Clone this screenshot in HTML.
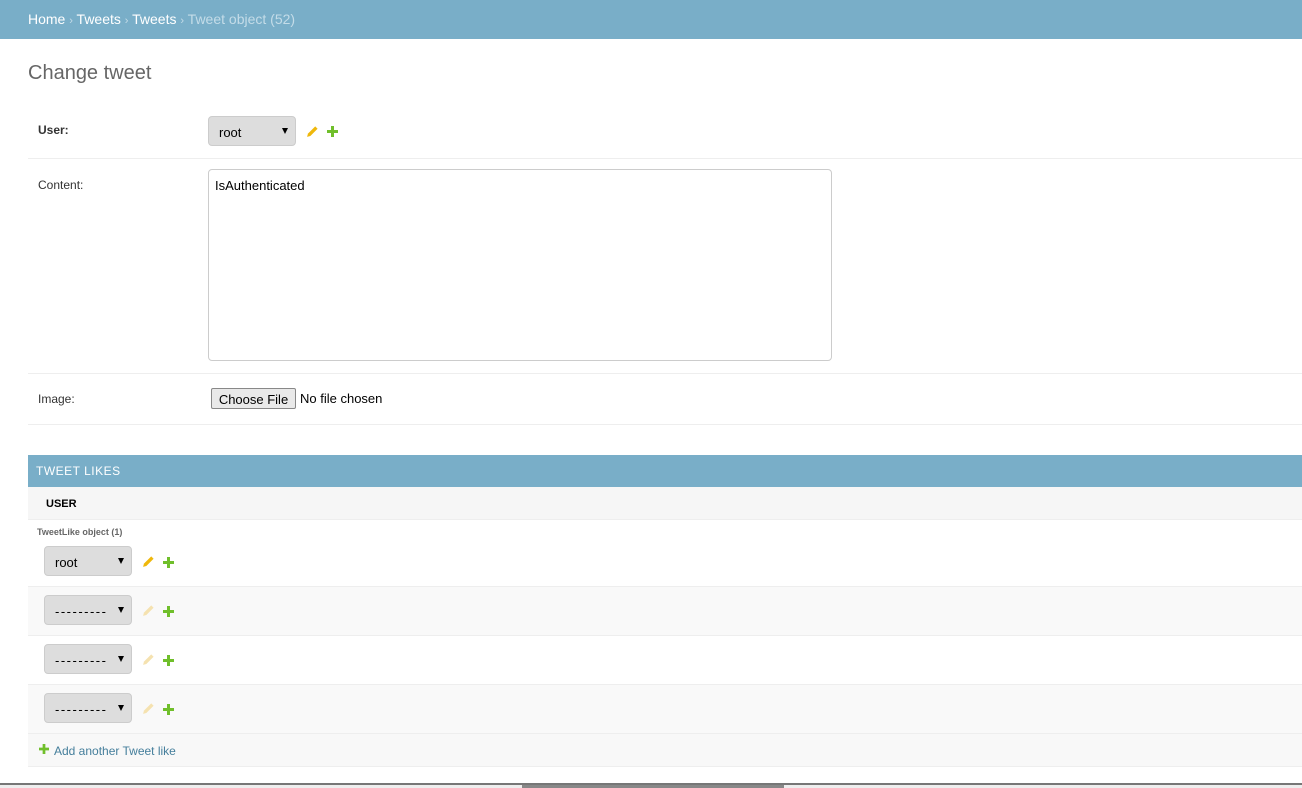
<!DOCTYPE html>
<html><head><style>
*{box-sizing:border-box;margin:0;padding:0}
body{width:1302px;height:788px;overflow:hidden;background:#fff;font-family:"Liberation Sans",sans-serif;font-size:13px;color:#333;position:relative}
.hdr{position:absolute;left:0;top:0;width:1302px;height:39px;background:#79aec8;color:#fff;font-size:14px;padding:11px 28px;white-space:nowrap}
.hdr .c{color:#c4dce8}
.hdr .s{font-size:11px;color:#c4dce8}
h1{position:absolute;left:28px;top:62px;font-size:20px;font-weight:normal;color:#666}
.row{position:absolute;left:28px;width:1274px;border-bottom:1px solid #eee}
.lab{position:absolute;left:10px;font-size:12px;color:#333}
.sel{position:absolute;background:#ddd;border:1px solid #ccc;border-radius:4px;height:30px;width:88px;font-size:13px;color:#000;padding:8px 10px;white-space:nowrap}
.sel.d{letter-spacing:1.5px}
.sel:after{content:"";position:absolute;right:7px;top:11px;border-left:3.5px solid transparent;border-right:3.5px solid transparent;border-top:6px solid #000}
.ic{position:absolute}
</style></head><body>
<div class="hdr">Home <span class="s">›</span> Tweets <span class="s">›</span> Tweets <span class="s">›</span> <span class="c">Tweet object (52)</span></div>
<h1>Change tweet</h1>

<div class="row" style="top:106px;height:53px">
<div class="lab" style="top:17px;font-weight:bold">User:</div>
<div class="sel" style="left:180px;top:10px">root</div>
<svg class="ic" style="left:278px;top:19px" width="13" height="13" viewBox="0 0 12 12"><path d="M1 11 L1.8 8 L8.5 1.3 L10.7 3.5 L4 10.2 Z" fill="#efb80b"/></svg>
<svg class="ic" style="left:299px;top:20px" width="11" height="11" viewBox="0 0 11 11"><path d="M4 0h3v4h4v3H7v4H4V7H0V4h4z" fill="#70bf2b"/></svg>
</div>

<div class="row" style="top:159px;height:215px">
<div class="lab" style="top:19px">Content:</div>
<div style="position:absolute;left:180px;top:10px;width:624px;height:192px;border:1px solid #ccc;border-radius:4px;padding:8px 6px;color:#000;font-size:13px">IsAuthenticated</div>
</div>

<div class="row" style="top:374px;height:51px">
<div class="lab" style="top:18px">Image:</div>
<div style="position:absolute;left:183px;top:14px;width:85px;height:21px;border:1px solid #888;background:#e9e9e9;border-radius:2px;font-size:13px;color:#000;padding:3px 0;text-align:center;white-space:nowrap">Choose File</div>
<div style="position:absolute;left:272px;top:17px;font-size:13px;color:#000;white-space:nowrap">No file chosen</div>
</div>

<div style="position:absolute;left:28px;top:455px;width:1274px;height:32px;background:#79aec8;color:#fff;font-size:12px;padding:9px 8px;letter-spacing:.5px">TWEET LIKES</div>
<div class="row" style="top:487px;height:33px;background:#f6f6f6"><div style="position:absolute;left:18px;top:11px;font-size:11px;font-weight:bold;color:#000">USER</div></div>

<div class="row" style="top:520px;height:67px">
<div style="position:absolute;left:9px;top:7px;font-size:9px;font-weight:bold;color:#666">TweetLike object (1)</div>
<div class="sel" style="left:16px;top:26px">root</div>
<svg class="ic" style="left:114px;top:35px" width="13" height="13" viewBox="0 0 12 12"><path d="M1 11 L1.8 8 L8.5 1.3 L10.7 3.5 L4 10.2 Z" fill="#efb80b"/></svg>
<svg class="ic" style="left:135px;top:37px" width="11" height="11" viewBox="0 0 11 11"><path d="M4 0h3v4h4v3H7v4H4V7H0V4h4z" fill="#70bf2b"/></svg>
</div>

<div class="row" style="top:587px;height:49px;background:#f9f9f9">
<div class="sel d" style="left:16px;top:8px">---------</div>
<svg class="ic" style="left:114px;top:17px" width="13" height="13" viewBox="0 0 12 12"><path d="M1 11 L1.8 8 L8.5 1.3 L10.7 3.5 L4 10.2 Z" fill="#f5e2b0"/></svg>
<svg class="ic" style="left:135px;top:19px" width="11" height="11" viewBox="0 0 11 11"><path d="M4 0h3v4h4v3H7v4H4V7H0V4h4z" fill="#70bf2b"/></svg>
</div>
<div class="row" style="top:636px;height:49px">
<div class="sel d" style="left:16px;top:8px">---------</div>
<svg class="ic" style="left:114px;top:17px" width="13" height="13" viewBox="0 0 12 12"><path d="M1 11 L1.8 8 L8.5 1.3 L10.7 3.5 L4 10.2 Z" fill="#f5e2b0"/></svg>
<svg class="ic" style="left:135px;top:19px" width="11" height="11" viewBox="0 0 11 11"><path d="M4 0h3v4h4v3H7v4H4V7H0V4h4z" fill="#70bf2b"/></svg>
</div>
<div class="row" style="top:685px;height:49px;background:#f9f9f9">
<div class="sel d" style="left:16px;top:8px">---------</div>
<svg class="ic" style="left:114px;top:17px" width="13" height="13" viewBox="0 0 12 12"><path d="M1 11 L1.8 8 L8.5 1.3 L10.7 3.5 L4 10.2 Z" fill="#f5e2b0"/></svg>
<svg class="ic" style="left:135px;top:19px" width="11" height="11" viewBox="0 0 11 11"><path d="M4 0h3v4h4v3H7v4H4V7H0V4h4z" fill="#70bf2b"/></svg>
</div>
<div class="row" style="top:734px;height:33px;background:#f8f8f8">
<svg class="ic" style="left:11px;top:10px" width="10" height="10" viewBox="0 0 11 11"><path d="M4 0h3v4h4v3H7v4H4V7H0V4h4z" fill="#70bf2b"/></svg>
<div style="position:absolute;left:26px;top:10px;font-size:12px;color:#447e9b">Add another Tweet like</div>
</div>

<div style="position:absolute;left:0;top:783px;width:1302px;height:2px;background:#777"></div>
<div style="position:absolute;left:0;top:785px;width:1302px;height:3px;background:#eee"></div>
<div style="position:absolute;left:522px;top:785px;width:262px;height:3px;background:#888"></div>
</body></html>
